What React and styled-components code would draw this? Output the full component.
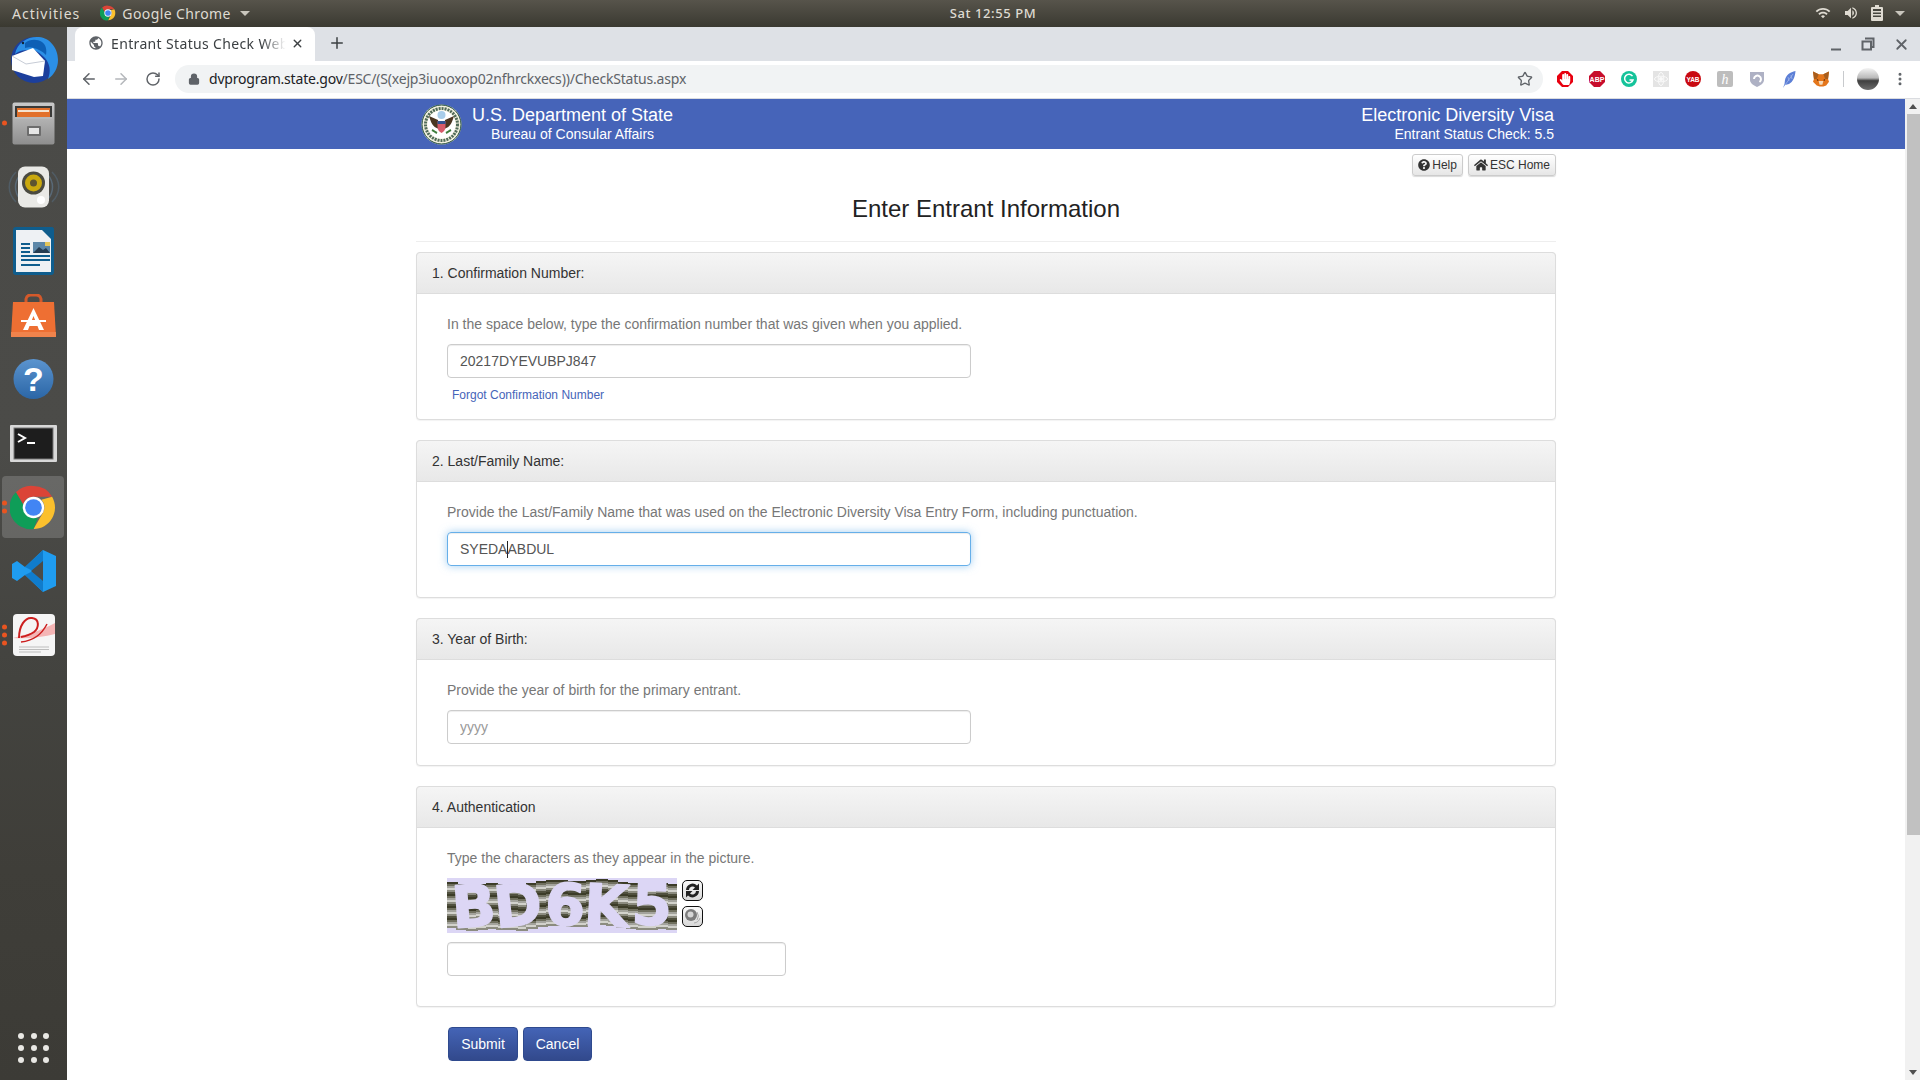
import styled, { createGlobalStyle } from "styled-components";
import { ArrowLeft, ArrowRight, RotateCw, Lock, Star, X, Plus, MoreVertical } from "lucide-react";
import { FaQuestionCircle, FaHome, FaHandPaper } from "react-icons/fa";
import { MdPublic, MdWifi, MdVolumeUp } from "react-icons/md";

const GlobalStyle = createGlobalStyle`
    html, body {
        margin: 0;
        height: 1080px;
        overflow: hidden;
        background: #fff;
    }
    * {
        box-sizing: border-box;
    }
`

const Desktop = styled.div`
    display: grid;
    grid-template-columns: 67px 1fr;
    grid-template-rows: 27px 1053px;
    width: 1920px;
    height: 1080px;
    font-family: "Liberation Sans", Arial, sans-serif;
`

const TopBar = styled.div`
    grid-column: 1 / 3;
    display: grid;
    grid-template-columns: 943px 100px 1fr;
    align-items: center;
    padding-bottom: 1px;
    background: linear-gradient(#57544b, #3a3931);
    color: #dfdbd2;
    font-family: "Noto Sans", sans-serif;
    font-size: 14px;
    letter-spacing: 1px;
`

const TopLeft = styled.div`
    display: flex;
    align-items: center;
    padding-left: 12px;
`

const AppMenu = styled.span`
    display: flex;
    align-items: center;
    gap: 6px;
    margin-left: 20px;
    letter-spacing: 0.4px;
`

const Caret = styled.span`
    width: 0;
    height: 0;
    border-left: 5px solid transparent;
    border-right: 5px solid transparent;
    border-top: 5px solid #c9c6bd;
    margin-left: ${(p) => p.$gap || 0}px;
`

const Clock = styled.div`
    white-space: nowrap;
    text-align: center;
    font-weight: 500;
    font-size: 13px;
    letter-spacing: 0.6px;
`

const TopRight = styled.div`
    display: flex;
    align-items: center;
    justify-content: flex-end;
    gap: 12px;
    padding-right: 15px;
`

const Dock = styled.div`
    display: flex;
    flex-direction: column;
    background: linear-gradient(#4a4a47 0, #4b4b48 40%, #43433f 62%, #3f3e39 80%, #3c3b36 100%);
`

const DockItem = styled.div`
    position: relative;
    display: flex;
    align-items: center;
    justify-content: center;
    height: 64px;
    flex: none;
`

const DockIconSlot = styled.span`
    position: relative;
    display: flex;
`

const DockHighlight = styled.div`
    position: absolute;
    left: 2px;
    right: 3px;
    top: 1px;
    bottom: 1px;
    border-radius: 4px;
    background: rgba(255, 255, 255, 0.17);
`

const RunDots = styled.div`
    position: absolute;
    left: 2px;
    top: 50%;
    transform: translateY(-50%);
    display: flex;
    flex-direction: column;
    gap: 3px;
`

const RunDot = styled.span`
    width: 5px;
    height: 5px;
    border-radius: 50%;
    background: #e95420;
`

const AppGrid = styled.div`
    display: grid;
    grid-template-columns: repeat(3, 6px);
    gap: 6px 6.5px;
    justify-content: center;
    margin-top: auto;
    padding-bottom: 17px;
`

const AppGridDot = styled.span`
    width: 6px;
    height: 6px;
    border-radius: 50%;
    background: #e9e8e4;
`

const Browser = styled.div`
    display: flex;
    flex-direction: column;
    min-width: 0;
    height: 1053px;
`

const TabStrip = styled.div`
    display: flex;
    align-items: center;
    height: 34px;
    flex: none;
    background: #dee1e6;
    color: #3c4043;
    padding-left: 8px;
`

const Tab = styled.div`
    display: flex;
    align-items: center;
    align-self: stretch;
    width: 240px;
    padding: 0 11px 2px 13px;
    background: #fff;
    border-radius: 8px 8px 0 0;
    font-family: "Noto Sans", sans-serif;
    font-size: 14px;
    letter-spacing: 0.35px;
`

const TabTitle = styled.span`
    flex: 1;
    margin-left: 7px;
    white-space: nowrap;
    overflow: hidden;
    -webkit-mask-image: linear-gradient(90deg, #000 84%, transparent 97%);
    mask-image: linear-gradient(90deg, #000 84%, transparent 97%);
`

const NewTab = styled.span`
    display: flex;
    margin: 0 0 2px 13px;
`

const WindowButtons = styled.div`
    display: flex;
    align-items: center;
    gap: 18px;
    margin-left: auto;
    padding: 0 10px 0 0;
    color: #5f6368;
`

const Toolbar = styled.div`
    display: flex;
    align-items: center;
    height: 38px;
    flex: none;
    background: #fff;
    border-bottom: 1px solid #dadce0;
    padding: 0 0 1px 6px;
    color: #5f6368;
`

const NavButton = styled.span`
    display: flex;
    justify-content: center;
    width: 32px;
    color: ${(p) => (p.$disabled ? "#b4b7bb" : "#5f6368")};
`

const Omnibox = styled.div`
    display: flex;
    align-items: center;
    width: 1368px;
    height: 28px;
    margin-left: 6px;
    padding: 0 10px 0 13px;
    border-radius: 14px;
    background: #f1f3f4;
    font-family: "Noto Sans", sans-serif;
    font-size: 14px;
`

const Url = styled.span`
    flex: 1;
    margin-left: 9px;
    padding-bottom: 1px;
    color: #5f6368;
    letter-spacing: -0.2px;
`

const UrlHost = styled.span`
    color: #202124;
`

const Extensions = styled.div`
    display: flex;
    align-items: center;
    gap: 16px;
    margin-left: 14px;
`

const ExtensionBox = styled.span`
    position: relative;
    display: flex;
    align-items: center;
    justify-content: center;
    width: 16px;
    height: 16px;
`

const ExtensionGlyph = styled.span`
    position: absolute;
    left: 2px;
    top: 2px;
    display: flex;
`

const ToolbarDivider = styled.span`
    width: 1px;
    height: 16px;
    margin: 0 13px 0 -2px;
    background: #c8cacd;
`

const Avatar = styled.span`
    width: 22px;
    height: 22px;
    border-radius: 50%;
    margin-right: 13px;
    background: linear-gradient(#f4f4f4 0, #b9b9b9 45%, #3f3f3f 58%, #6d6d6d 100%);
`

const PageRow = styled.div`
    display: flex;
    flex: 1;
    min-height: 0;
`

const Page = styled.div`
    flex: 1;
    min-width: 0;
    overflow: hidden;
    background: #fff;
`

const Scrollbar = styled.div`
    display: flex;
    flex-direction: column;
    align-items: center;
    width: 15px;
    flex: none;
    background: #f1f1f1;
`

const ScrollArrow = styled.span`
    display: flex;
    align-items: center;
    justify-content: center;
    height: 15px;
    width: 15px;
    flex: none;
    margin-top: ${(p) => (p.$down ? "auto" : "0")};
    &::after {
        content: "";
        border-left: 4px solid transparent;
        border-right: 4px solid transparent;
        border-${(p) => (p.$down ? "top" : "bottom")}: 5px solid #505050;
    }
`

const ScrollThumb = styled.span`
    width: 13px;
    height: 721px;
    margin-left: 2px;
    background: #c1c1c1;
`

const SiteHeader = styled.header`
    background: #4664b9;
    color: #fff;
    height: 50px;
`

const Container = styled.div`
    width: 1140px;
    margin: 0 auto;
`

const HeaderInner = styled(Container)`
    display: flex;
    justify-content: space-between;
    align-items: center;
    height: 50px;
    padding: 0 2px 0 5px;
`

const Agency = styled.div`
    display: flex;
    align-items: center;
    gap: 10px;
`

const AgencyText = styled.div`
    text-align: ${(p) => p.$align};
`

const HeaderTitle = styled.div`
    font-size: 18px;
    line-height: 20px;
`

const HeaderSub = styled.div`
    font-size: 14px;
    line-height: 18px;
`

const HelpRow = styled.div`
    display: flex;
    justify-content: flex-end;
    gap: 5px;
    padding-top: 5px;
`

const SmallButton = styled.span`
    display: inline-flex;
    align-items: center;
    gap: 2px;
    height: 22px;
    padding: 0 5px;
    border: 1px solid #ccc;
    border-radius: 3px;
    background: linear-gradient(#fff, #e6e6e6);
    box-shadow: 0 1px 1px rgba(0, 0, 0, 0.15);
    color: #333;
    font-size: 12px;
`

const PageTitle = styled.h1`
    margin: 20px 0 10px;
    padding-bottom: 19px;
    border-bottom: 1px solid #eee;
    color: #222;
    font-size: 24px;
    font-weight: 400;
    line-height: 26px;
    text-align: center;
`

const PanelStack = styled.div`
    display: flex;
    flex-direction: column;
    gap: 20px;
`

const Panel = styled.section`
    border: 1px solid #ddd;
    border-radius: 4px;
    box-shadow: 0 1px 1px rgba(0, 0, 0, 0.05);
    background: #fff;
`

const PanelHeading = styled.div`
    height: 42px;
    margin: -1px -1px 0;
    padding: 0 15px;
    display: flex;
    align-items: center;
    border: 1px solid #ddd;
    border-radius: 4px 4px 0 0;
    background: linear-gradient(#f5f5f5, #e8e8e8);
    color: #333;
    font-size: 14px;
`

const PanelBody = styled.div`
    padding: 20px 30px ${(p) => p.$bottom}px;
`

const Hint = styled.p`
    margin: 0 0 10px;
    color: #777;
    font-size: 14px;
    line-height: 20px;
`

const TextInput = styled.input`
    display: block;
    width: ${(p) => p.$width || 524}px;
    height: 34px;
    padding: 6px 12px;
    border: 1px solid #ccc;
    border-radius: 4px;
    box-shadow: inset 0 1px 1px rgba(0, 0, 0, 0.075);
    outline: none;
    color: #555;
    font-family: "Liberation Sans", Arial, sans-serif;
    font-size: 14px;
    &::placeholder {
        color: #999;
    }
`

const FocusedInput = styled.div`
    display: flex;
    align-items: center;
    width: 524px;
    height: 34px;
    padding: 0 12px;
    border: 1px solid #66afe9;
    border-radius: 4px;
    box-shadow: inset 0 1px 1px rgba(0, 0, 0, 0.075), 0 0 8px rgba(102, 175, 233, 0.6);
    color: #555;
    font-size: 14px;
`

const TextCaret = styled.span`
    width: 1px;
    height: 17px;
    margin-right: -1px;
    background: #222;
`

const ForgotLink = styled.a`
    display: block;
    margin: 9px 0 0 5px;
    color: #4664b9;
    font-size: 12px;
    line-height: 17px;
`

const CaptchaRow = styled.div`
    display: flex;
    gap: 5px;
    margin-bottom: 9px;
`

const CaptchaSvg = styled.svg`
    display: block;
    overflow: visible;
    flex: none;
`

const CaptchaTools = styled.div`
    display: flex;
    flex-direction: column;
    gap: 5px;
    padding-top: 2px;
`

const CaptchaTool = styled.span`
    display: flex;
    align-items: center;
    justify-content: center;
    width: 21px;
    height: 21px;
    border: 1px solid #111;
    border-radius: 5px;
    background: linear-gradient(#fafafa, #d8d8d8);
`

const Actions = styled.div`
    display: flex;
    gap: 5px;
    padding: 20px 0 0 32px;
`

const PrimaryButton = styled.span`
    display: flex;
    align-items: center;
    justify-content: center;
    width: ${(p) => p.$width}px;
    height: 34px;
    border: 1px solid #2f4a8e;
    border-radius: 4px;
    background: linear-gradient(#4464b6, #32498c);
    color: #fff;
    font-size: 14px;
`

function ChromeLogo({ size }) {
    return (
        <svg width={size} height={size} viewBox="0 0 48 48">
            <path d="M24 2a22 22 0 0 1 19 11H24a11 11 0 0 0-10.500 7.500L6 8.500A22 22 0 0 1 24 2z" fill="#db4437" />
            <path d="M43 13a22 22 0 0 1-19 33l9.500-16.500A11 11 0 0 0 32 16z" fill="#fbc02d" />
            <path d="M6 8.500l9 15.500a11 11 0 0 0 13.500 10.500L24 46A22 22 0 0 1 6 8.500z" fill="#0f9d58" />
            <circle cx="24" cy="24" r="11" fill="#fff" />
            <circle cx="24" cy="24" r="8.500" fill="#4285f4" />
        </svg>
    )
}

function ThunderbirdIcon() {
    return (
        <svg width="50" height="47" viewBox="0 0 50 47">
            <circle cx="25" cy="24" r="23" fill="#1c3f9c" />
            <path d="M6 18C8 6 20 0 30 1c11 1 19 11 19 23 0 8-4 15-10 19 3-8 2-15-3-21-5-5-9-8-13-8-7 0-12 0-17 4z" fill="#2b8fe6" />
            <path d="M16 7c5-4 12-4 17-1 4 3 5 8 4 13-4-4-8-6-12-7-3-1-6-1-9 0z" fill="#0d5fb5" />
            <path d="M3 20 24 12l12 13-2 15-9 1L3 34z" fill="#fff" />
            <path d="M3 20l14 8 19-3" fill="none" stroke="#c7ccd6" strokeWidth="1" />
            <circle cx="14" cy="7" r="1.200" fill="#123" />
        </svg>
    )
}

function FilesIcon() {
    return (
        <svg width="43" height="43" viewBox="0 0 43 43">
            <defs>
                <linearGradient id="cabinet" x1="0" y1="0" x2="0" y2="1">
                    <stop offset="0" stopColor="#c9c9c9" />
                    <stop offset="1" stopColor="#8e8e8e" />
                </linearGradient>
            </defs>
            <rect x="0.500" y="0.500" width="42" height="42" rx="2" fill="url(#cabinet)" />
            <rect x="3" y="4" width="37" height="13" fill="#3a3a38" />
            <rect x="5" y="6" width="33" height="9" fill="#e2702a" />
            <rect x="6" y="8" width="31" height="2" fill="#f5e3cf" />
            <rect x="3" y="15" width="37" height="2" fill="#b9b9b9" />
            <rect x="15" y="24" width="14" height="10" rx="1" fill="#6d6d6d" />
            <rect x="17" y="26" width="10" height="6" fill="#e6e6e6" />
        </svg>
    )
}

function SpeakerIcon() {
    return (
        <svg width="52" height="42" viewBox="0 0 52 42">
            <path d="M8 6C-1 15-1 27 8 36M44 6c9 9 9 21 0 30" fill="none" stroke="#5d7e9e" strokeWidth="1.500" opacity="0.35" />
            <path d="M12 9C6 16 6 26 12 33M40 9c6 7 6 17 0 24" fill="none" stroke="#6a8eb0" strokeWidth="1.500" opacity="0.45" />
            <rect x="10" y="0.500" width="31" height="41" rx="7" fill="#e9e9e6" />
            <circle cx="25.500" cy="17" r="11.500" fill="#4a4a40" />
            <circle cx="25.500" cy="17" r="8.500" fill="#c9a80e" />
            <circle cx="25.500" cy="17" r="3.500" fill="#5c5330" />
            <circle cx="33" cy="34" r="4" fill="#fff" />
        </svg>
    )
}

function WriterIcon() {
    return (
        <svg width="41" height="48" viewBox="0 0 41 48">
            <path d="M3 0h35a3 3 0 0 1 3 3v42a3 3 0 0 1-3 3H3a3 3 0 0 1-3-3V3a3 3 0 0 1 3-3z" fill="#0f5d8d" />
            <path d="M3 3h26l9 9v33H3z" fill="#eef1f4" />
            <path d="M29 0h9a3 3 0 0 1 3 3v9z" fill="#0f5d8d" />
            <path d="M8 17h9M8 21h9M8 25h9M8 29h29M8 33h29M8 38h19" stroke="#0f5d8d" strokeWidth="2" />
            <rect x="20" y="15" width="17" height="11" fill="#5c87a8" />
            <path d="M20 26l6-6 4 3 3-2 4 5z" fill="#263d52" />
            <rect x="32" y="15" width="5" height="4" fill="#e3c55a" />
        </svg>
    )
}

function StoreIcon() {
    return (
        <svg width="45" height="43" viewBox="0 0 45 43">
            <path d="M15 10V5a5 5 0 0 1 5-4h5a5 5 0 0 1 5 4v5" fill="none" stroke="#d4592a" strokeWidth="3" />
            <path d="M2 8h41l2 35H0z" fill="#ee6f33" />
            <path d="M0 38h45v5H0z" fill="#f0834c" />
            <path d="M22.500 14 33 36h-5l-1.500-4h-8L17 36h-5zM20.500 27h4l-2-5z" fill="#fff" />
            <path d="M10 26h25v2H10z" fill="#fff" />
        </svg>
    )
}

function HelpIcon() {
    return (
        <svg width="41" height="40" viewBox="0 0 41 40">
            <defs>
                <linearGradient id="helpBall" x1="0" y1="0" x2="0" y2="1">
                    <stop offset="0" stopColor="#5b94cf" />
                    <stop offset="1" stopColor="#2b66a6" />
                </linearGradient>
            </defs>
            <circle cx="20.500" cy="20" r="20" fill="url(#helpBall)" />
            <text x="20.500" y="32" textAnchor="middle" fontFamily="Liberation Sans" fontWeight="700" fontSize="34" fill="#fff">?</text>
        </svg>
    )
}

function TerminalIcon() {
    return (
        <svg width="47" height="37" viewBox="0 0 47 37">
            <rect width="47" height="37" rx="1" fill="#d8d8d8" />
            <rect x="4" y="3" width="39" height="31" fill="#1d1d1d" stroke="#777" />
            <path d="M8 9l7 4-7 4" fill="none" stroke="#fff" strokeWidth="2" />
            <path d="M17 18h8" stroke="#fff" strokeWidth="2" />
        </svg>
    )
}

function VsCodeIcon() {
    return (
        <svg width="44" height="42" viewBox="0 0 44 42">
            <path d="M31 0 44 6v30l-13 6-18-17-8 6-5-3v-14l5-3 8 6z" fill="#1f9cf0" />
            <path d="M31 0v42L13 25l8-4-8-4z" fill="#0e79c8" opacity="0.9" />
            <path d="M31 11 19 21l12 10z" fill="#4b4b48" />
        </svg>
    )
}

function EvinceIcon() {
    return (
        <svg width="42" height="42" viewBox="0 0 42 42">
            <rect width="42" height="42" rx="4" fill="#f5f5f5" />
            <path d="M0 24c12-3 28-7 42-15v11c-12 3-26 5-42 4z" fill="#f4b5b5" />
            <path d="M6 24C6 12 12 3 19 4c8 1 7 10 2 14-4 3-8 4-13 5" fill="none" stroke="#cc1f1f" strokeWidth="2" />
            <path d="M8 28c10-1 20-6 26-18" fill="none" stroke="#cc1f1f" strokeWidth="1.500" />
            <path d="M6 33h30M6 35.500h30M6 38h22" stroke="#bdbdbd" strokeWidth="1" />
        </svg>
    )
}

function Octagon({ color, children }) {
    return (
        <svg width="16" height="16" viewBox="0 0 16 16">
            <path d="M5 0h6l5 5v6l-5 5H5l-5-5V5z" fill={color} />
            {children}
        </svg>
    )
}

function HandBlock() {
    return (
        <>
            <Octagon color="#e8000f" />
            <ExtensionGlyph><FaHandPaper size={12} color="#fff" /></ExtensionGlyph>
        </>
    )
}

function AbpIcon() {
    return (
        <Octagon color="#c70d2c">
            <text x="8" y="10.800" textAnchor="middle" fontFamily="Liberation Sans" fontWeight="700" fontSize="7" fill="#fff">ABP</text>
        </Octagon>
    )
}

function GrammarlyIcon() {
    return (
        <svg width="16" height="16" viewBox="0 0 16 16">
            <circle cx="8" cy="8" r="8" fill="#15c39a" />
            <path d="M11.500 5.200A4.300 4.300 0 1 0 12 9H8.500" fill="none" stroke="#fff" strokeWidth="1.500" />
        </svg>
    )
}

function AtomIcon() {
    return (
        <svg width="16" height="16" viewBox="0 0 16 16">
            <rect width="16" height="16" fill="#e4e4e4" />
            <ellipse cx="8" cy="8" rx="6.500" ry="2.800" fill="none" stroke="#fafafa" />
            <ellipse cx="8" cy="8" rx="2.800" ry="6.500" fill="none" stroke="#fafafa" />
            <circle cx="8" cy="8" r="2" fill="#fafafa" />
        </svg>
    )
}

function YabIcon() {
    return (
        <svg width="16" height="16" viewBox="0 0 16 16">
            <circle cx="8" cy="8" r="8" fill="#c90a12" />
            <text x="8" y="10.500" textAnchor="middle" fontFamily="Liberation Sans" fontWeight="700" fontSize="6.500" fill="#fff">YAB</text>
        </svg>
    )
}

function HoneyIcon() {
    return (
        <svg width="16" height="16" viewBox="0 0 16 16">
            <rect width="16" height="16" rx="2" fill="#bdbdbd" />
            <text x="8" y="12.500" textAnchor="middle" fontFamily="Liberation Serif" fontStyle="italic" fontSize="14" fill="#fff">h</text>
        </svg>
    )
}

function ShieldIcon() {
    return (
        <svg width="14" height="16" viewBox="0 0 14 16">
            <path d="M0 1h14v8c0 3-3 5-7 7-4-2-7-4-7-7z" fill="#aeb1c4" />
            <path d="M4 8a3.500 3.500 0 1 1 5.500 3" fill="none" stroke="#fff" strokeWidth="2" />
        </svg>
    )
}

function FeatherIcon() {
    return (
        <svg width="13" height="17" viewBox="0 0 13 17">
            <path d="M12.500 0C7 1 3 4 2 9l-.5 4L0 17l2-3 4-1c4-2 6-7 6.500-13z" fill="#5c7fd6" />
            <path d="M10 3 2 14M5 6l1 4M8 4l1 4" stroke="#a9bcec" strokeWidth="0.700" fill="none" />
        </svg>
    )
}

function FoxIcon() {
    return (
        <svg width="16" height="16" viewBox="0 0 17 16">
            <path d="M0 0l6 3h5l6-3-1 8 1 3-3 4-3 1H7l-3-1-4-4 1-3z" fill="#e4761b" />
            <path d="M0 0l6 3-2 5-3 0zM17 0l-6 3 2 5 3 0z" fill="#a85d1c" />
            <path d="M6 10h5l-1 4H7z" fill="#f5d9b8" />
            <path d="M4 8l2 1-1 1zM13 8l-2 1 1 1z" fill="#2b1a10" />
        </svg>
    )
}

function BatteryIcon() {
    return (
        <svg width="12" height="16" viewBox="0 0 12 16">
            <path d="M4 0h4v2h3a1 1 0 0 1 1 1v12a1 1 0 0 1-1 1H1a1 1 0 0 1-1-1V3a1 1 0 0 1 1-1h3z" fill="#dfdbd2" />
            <path d="M2 4h8v2H2zM2 7.500h8v1.500H2zM2 10.500h8V12H2z" fill="#47463f" />
        </svg>
    )
}

function MinimizeGlyph() {
    return (
        <svg width="14" height="14" viewBox="0 0 14 14">
            <path d="M2 12.500h10" stroke="currentColor" strokeWidth="2" />
        </svg>
    )
}

function RestoreGlyph() {
    return (
        <svg width="14" height="14" viewBox="0 0 14 14">
            <path d="M4 1.500h8.500V10H10M1.500 4.500H10V12.500H1.500z" fill="none" stroke="currentColor" strokeWidth="2" />
        </svg>
    )
}

function Seal() {
    return (
        <svg width="41" height="41" viewBox="0 0 41 41">
            <circle cx="20.500" cy="20.500" r="20" fill="#f3f1df" />
            <circle cx="20.500" cy="20.500" r="19.500" fill="none" stroke="#1d4a3a" />
            <circle cx="20.500" cy="20.500" r="16" fill="none" stroke="#4f6a58" strokeWidth="3" strokeDasharray="2 1" />
            <circle cx="20.500" cy="20.500" r="14" fill="#fff" />
            <circle cx="20.500" cy="11" r="4" fill="#a8cdea" />
            <path d="M8 12c2 6 3 11 10 13l-1-9zM33 12c-2 6-3 11-10 13l1-9z" fill="#4b3621" />
            <path d="M16.500 17h8v6c0 3-2 5-4 6-2-1-4-3-4-6z" fill="#d65b6a" />
            <path d="M16.500 17h8v3h-8z" fill="#33528f" />
            <path d="M11 26c2 1 3 2 5 3M30 26c-2 1-3 2-5 3" stroke="#3e7d3b" strokeWidth="2" fill="none" />
        </svg>
    )
}

const stripeTones = ["#3c3c28", "#70705f", "#a3a39c", "#d2d2cc", "#8c8c80", "#50503e"]

// blocky wave, drawn column by column like the scaled-up captcha image
function stripePath(y) {
    let d = ""
    for (let x = 0; x < 230; x += 10) {
        const shift = Math.round(2.4 * Math.sin(x / 28) + 1.2 * Math.sin(x / 9))
        d += `${x === 0 ? "M" : "L"}${x} ${y + shift} L${x + 10} ${y + shift} `
    }
    return d
}

function CaptchaImage() {
    const rows = []
    for (let y = 5; y < 51; y += 2) {
        rows.push(y)
    }
    const letters = [
        { ch: "B", x: 6, y: 50, r: -4 },
        { ch: "D", x: 49, y: 50, r: -6 },
        { ch: "6", x: 97, y: 46, r: 3 },
        { ch: "K", x: 136, y: 47, r: 3 },
        { ch: "5", x: 184, y: 46, r: 2 },
    ]
    return (
        <CaptchaSvg width="230" height="55" viewBox="0 0 230 55">
            <rect width="230" height="55" fill="#dcd6f5" />
            {rows.map((y, i) => (
                <path key={y} d={stripePath(y)} fill="none" stroke={stripeTones[i % stripeTones.length]} strokeWidth="2" />
            ))}
            {letters.map((l) => (
                <text
                    key={l.ch}
                    x={l.x}
                    y={l.y}
                    transform={`rotate(${l.r} ${l.x} ${l.y})`}
                    fontFamily="DejaVu Sans"
                    fontWeight="700"
                    fontSize="58"
                    fill="#dcd6f5"
                    stroke="#dcd6f5"
                    strokeWidth="1.500"
                    strokeLinejoin="round"
                >
                    {l.ch}
                </text>
            ))}
        </CaptchaSvg>
    )
}

function RefreshGlyph() {
    return (
        <svg width="17" height="17" viewBox="0 0 17 17">
            <path d="M2 8a6.500 6.500 0 0 1 11-4.500L15 1.500v6.500H8.500l2.500-2.500A3.500 3.500 0 0 0 5 8z" fill="#222" />
            <path d="M15 9a6.500 6.500 0 0 1-11 4.500L2 15.500V9h6.500L6 11.500A3.500 3.500 0 0 0 12 9z" fill="#222" />
        </svg>
    )
}

function AudioGlyph() {
    return (
        <svg width="17" height="17" viewBox="0 0 17 17">
            <circle cx="7" cy="7" r="6" fill="#7c7c7c" />
            <circle cx="6.500" cy="6.500" r="3" fill="#d6d6d6" />
            <path d="M13 4a7 7 0 0 1 0 8M10 15a7 7 0 0 0 6-5" stroke="#aaa" fill="none" />
        </svg>
    )
}

const dockApps = [
    { icon: <ThunderbirdIcon />, dots: 0 },
    { icon: <FilesIcon />, dots: 1 },
    { icon: <SpeakerIcon />, dots: 0 },
    { icon: <WriterIcon />, dots: 0 },
    { icon: <StoreIcon />, dots: 0 },
    { icon: <HelpIcon />, dots: 0 },
    { icon: <TerminalIcon />, dots: 0 },
    { icon: <ChromeLogo size={47} />, dots: 2, active: true },
    { icon: <VsCodeIcon />, dots: 0 },
    { icon: <EvinceIcon />, dots: 3 },
]

const extensionIcons = [
    <HandBlock />,
    <AbpIcon />,
    <GrammarlyIcon />,
    <AtomIcon />,
    <YabIcon />,
    <HoneyIcon />,
    <ShieldIcon />,
    <FeatherIcon />,
    <FoxIcon />,
]

function App() {
    return (
        <Desktop>
            <GlobalStyle />
            <TopBar>
                <TopLeft>
                    <span>Activities</span>
                    <AppMenu>
                        <ChromeLogo size={16} />
                        Google Chrome
                        <Caret $gap={3} />
                    </AppMenu>
                </TopLeft>
                <Clock>Sat 12:55 PM</Clock>
                <TopRight>
                    <MdWifi size={16} color="#dfdbd2" />
                    <MdVolumeUp size={16} color="#dfdbd2" />
                    <BatteryIcon />
                    <Caret />
                </TopRight>
            </TopBar>

            <Dock>
                {dockApps.map((app, index) => (
                    <DockItem key={index}>
                        {app.active && <DockHighlight />}
                        {app.dots > 0 && (
                            <RunDots>
                                {Array.from({ length: app.dots }).map((_, i) => <RunDot key={i} />)}
                            </RunDots>
                        )}
                        <DockIconSlot>{app.icon}</DockIconSlot>
                    </DockItem>
                ))}
                <AppGrid>
                    {Array.from({ length: 9 }).map((_, i) => <AppGridDot key={i} />)}
                </AppGrid>
            </Dock>

            <Browser>
                <TabStrip>
                    <Tab>
                        <MdPublic size={16} color="#5f6368" />
                        <TabTitle>Entrant Status Check Web</TabTitle>
                        <X size={13} strokeWidth={2.500} color="#3c4043" />
                    </Tab>
                    <NewTab><Plus size={18} strokeWidth={2} /></NewTab>
                    <WindowButtons>
                        <MinimizeGlyph />
                        <RestoreGlyph />
                        <X size={17} strokeWidth={2.500} />
                    </WindowButtons>
                </TabStrip>
                <Toolbar>
                    <NavButton><ArrowLeft size={18} strokeWidth={2} /></NavButton>
                    <NavButton $disabled><ArrowRight size={18} strokeWidth={2} /></NavButton>
                    <NavButton><RotateCw size={16} strokeWidth={2.200} /></NavButton>
                    <Omnibox>
                        <Lock size={12} strokeWidth={2.500} fill="#5f6368" color="#5f6368" />
                        <Url><UrlHost>dvprogram.state.gov</UrlHost>/ESC/(S(xejp3iuooxop02nfhrckxecs))/CheckStatus.aspx</Url>
                        <Star size={16} strokeWidth={2} color="#5f6368" />
                    </Omnibox>
                    <Extensions>
                        {extensionIcons.map((icon, index) => (
                            <ExtensionBox key={index}>{icon}</ExtensionBox>
                        ))}
                        <ToolbarDivider />
                    </Extensions>
                    <Avatar />
                    <MoreVertical size={16} strokeWidth={2.500} />
                </Toolbar>
                <PageRow>
                    <Page>
                        <SiteHeader>
                            <HeaderInner>
                                <Agency>
                                    <Seal />
                                    <AgencyText $align="center">
                                        <HeaderTitle>U.S. Department of State</HeaderTitle>
                                        <HeaderSub>Bureau of Consular Affairs</HeaderSub>
                                    </AgencyText>
                                </Agency>
                                <AgencyText $align="right">
                                    <HeaderTitle>Electronic Diversity Visa</HeaderTitle>
                                    <HeaderSub>Entrant Status Check: 5.5</HeaderSub>
                                </AgencyText>
                            </HeaderInner>
                        </SiteHeader>
                        <Container>
                            <HelpRow>
                                <SmallButton><FaQuestionCircle size={12} /> Help</SmallButton>
                                <SmallButton><FaHome size={14} /> ESC Home</SmallButton>
                            </HelpRow>
                            <PageTitle>Enter Entrant Information</PageTitle>
                            <PanelStack>
                                <Panel>
                                    <PanelHeading>1. Confirmation Number:</PanelHeading>
                                    <PanelBody $bottom={15}>
                                        <Hint>In the space below, type the confirmation number that was given when you applied.</Hint>
                                        <TextInput readOnly value="20217DYEVUBPJ847" />
                                        <ForgotLink>Forgot Confirmation Number</ForgotLink>
                                    </PanelBody>
                                </Panel>
                                <Panel>
                                    <PanelHeading>2. Last/Family Name:</PanelHeading>
                                    <PanelBody $bottom={31}>
                                        <Hint>Provide the Last/Family Name that was used on the Electronic Diversity Visa Entry Form, including punctuation.</Hint>
                                        <FocusedInput>SYEDA<TextCaret />ABDUL</FocusedInput>
                                    </PanelBody>
                                </Panel>
                                <Panel>
                                    <PanelHeading>3. Year of Birth:</PanelHeading>
                                    <PanelBody $bottom={21}>
                                        <Hint>Provide the year of birth for the primary entrant.</Hint>
                                        <TextInput readOnly placeholder="yyyy" />
                                    </PanelBody>
                                </Panel>
                                <Panel>
                                    <PanelHeading>4. Authentication</PanelHeading>
                                    <PanelBody $bottom={30}>
                                        <Hint>Type the characters as they appear in the picture.</Hint>
                                        <CaptchaRow>
                                            <CaptchaImage />
                                            <CaptchaTools>
                                                <CaptchaTool><RefreshGlyph /></CaptchaTool>
                                                <CaptchaTool><AudioGlyph /></CaptchaTool>
                                            </CaptchaTools>
                                        </CaptchaRow>
                                        <TextInput readOnly $width={339} />
                                    </PanelBody>
                                </Panel>
                            </PanelStack>
                            <Actions>
                                <PrimaryButton $width={70}>Submit</PrimaryButton>
                                <PrimaryButton $width={69}>Cancel</PrimaryButton>
                            </Actions>
                        </Container>
                    </Page>
                    <Scrollbar>
                        <ScrollArrow />
                        <ScrollThumb />
                        <ScrollArrow $down />
                    </Scrollbar>
                </PageRow>
            </Browser>
        </Desktop>
    )
}

export default App
